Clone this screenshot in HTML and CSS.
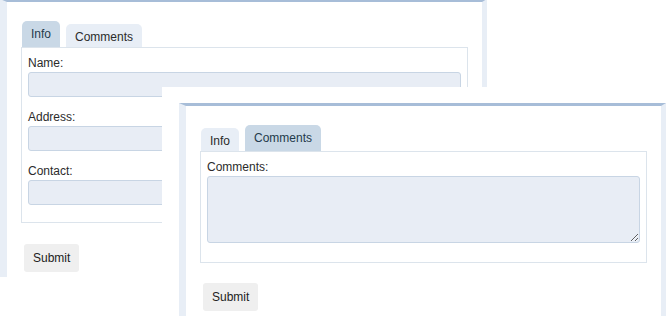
FILE: index.html
```html
<!DOCTYPE html>
<html lang="en">
<head>
    <meta charset="UTF-8">
    <meta name="viewport" content="width=device-width, initial-scale=1.0">
    <title>Tabbed forms</title>
    <link rel="stylesheet" href="styles.css">
</head>
<body>

<!-- First window: Info tab open -->
<div class="window">
    <div class="tabs">
        <div class="tab active">Info</div>
        <div class="tab">Comments</div>
    </div>
    <div class="panel">
        <div class="field">
            <label>Name:</label>
            <input type="text">
        </div>
        <div class="field">
            <label>Address:</label>
            <input type="text">
        </div>
        <div class="field">
            <label>Contact:</label>
            <input type="text">
        </div>
    </div>
    <button class="submit">Submit</button>
</div>

<!-- Second window: Comments tab open -->
<div class="frame">
    <div class="window">
        <div class="tabs">
            <div class="tab">Info</div>
            <div class="tab active">Comments</div>
        </div>
        <div class="panel">
            <div class="field">
                <label>Comments:</label>
                <textarea></textarea>
            </div>
        </div>
        <button class="submit">Submit</button>
    </div>
</div>

</body>
</html>
```

FILE: styles.css
```css
html, body {
    margin: 0;
    overflow: hidden;
    background-color: #ffffff;
}

body {
    font-family: 'Liberation Sans', Arial, sans-serif;
    font-size: 12px;
    color: #2b2b2b;
}

/* Window */
.window {
    width: 487px;
    box-sizing: border-box;
    margin-top: -1px;
    padding: 19px 14px 5px 14px;
    background-color: #ffffff;
    border-top: 3px solid #a7bdd8;
    border-left: 7px solid #e8eef6;
    border-right: 5px solid #e8eef6;
}

.frame {
    position: absolute;
    left: 162px;
    top: 87px;
    padding: 16px 0 0 17px;
    background-color: #ffffff;
}

.frame .window {
    margin-top: 0;
}

/* Tabs */
.tabs {
    display: flex;
    align-items: flex-end;
    gap: 6px;
    margin-left: 1px;
}

.tab {
    height: 23px;
    line-height: 26px;
    padding: 0 9px;
    background-color: #e8eef6;
    border-radius: 5px 5px 0 0;
    color: #2b2b2b;
}

.tab.active {
    height: 26px;
    background-color: #c9d8e6;
    color: #1f3a4b;
}

/* Panel */
.panel {
    border: 1px solid #dce4ec;
    padding: 7px 6px 5px 6px;
}

.field label {
    display: block;
    line-height: 16px;
}

.field input,
.field textarea {
    display: block;
    width: 100%;
    box-sizing: border-box;
    margin: 1px 0 12px 0;
    background-color: #e8edf5;
    border: 1px solid #c8d5e4;
    border-radius: 3px;
    font-family: inherit;
    font-size: 12px;
}

.field input {
    height: 25px;
}

.field textarea {
    height: 67px;
    margin-bottom: 14px;
}

/* Submit */
.submit {
    margin: 21px 0 0 3px;
    height: 28px;
    padding: 0 9px;
    background-color: #efefef;
    border: none;
    border-radius: 3px;
    font-family: inherit;
    font-size: 12px;
    color: #222222;
}

.frame .submit {
    margin-top: 20px;
}
```
